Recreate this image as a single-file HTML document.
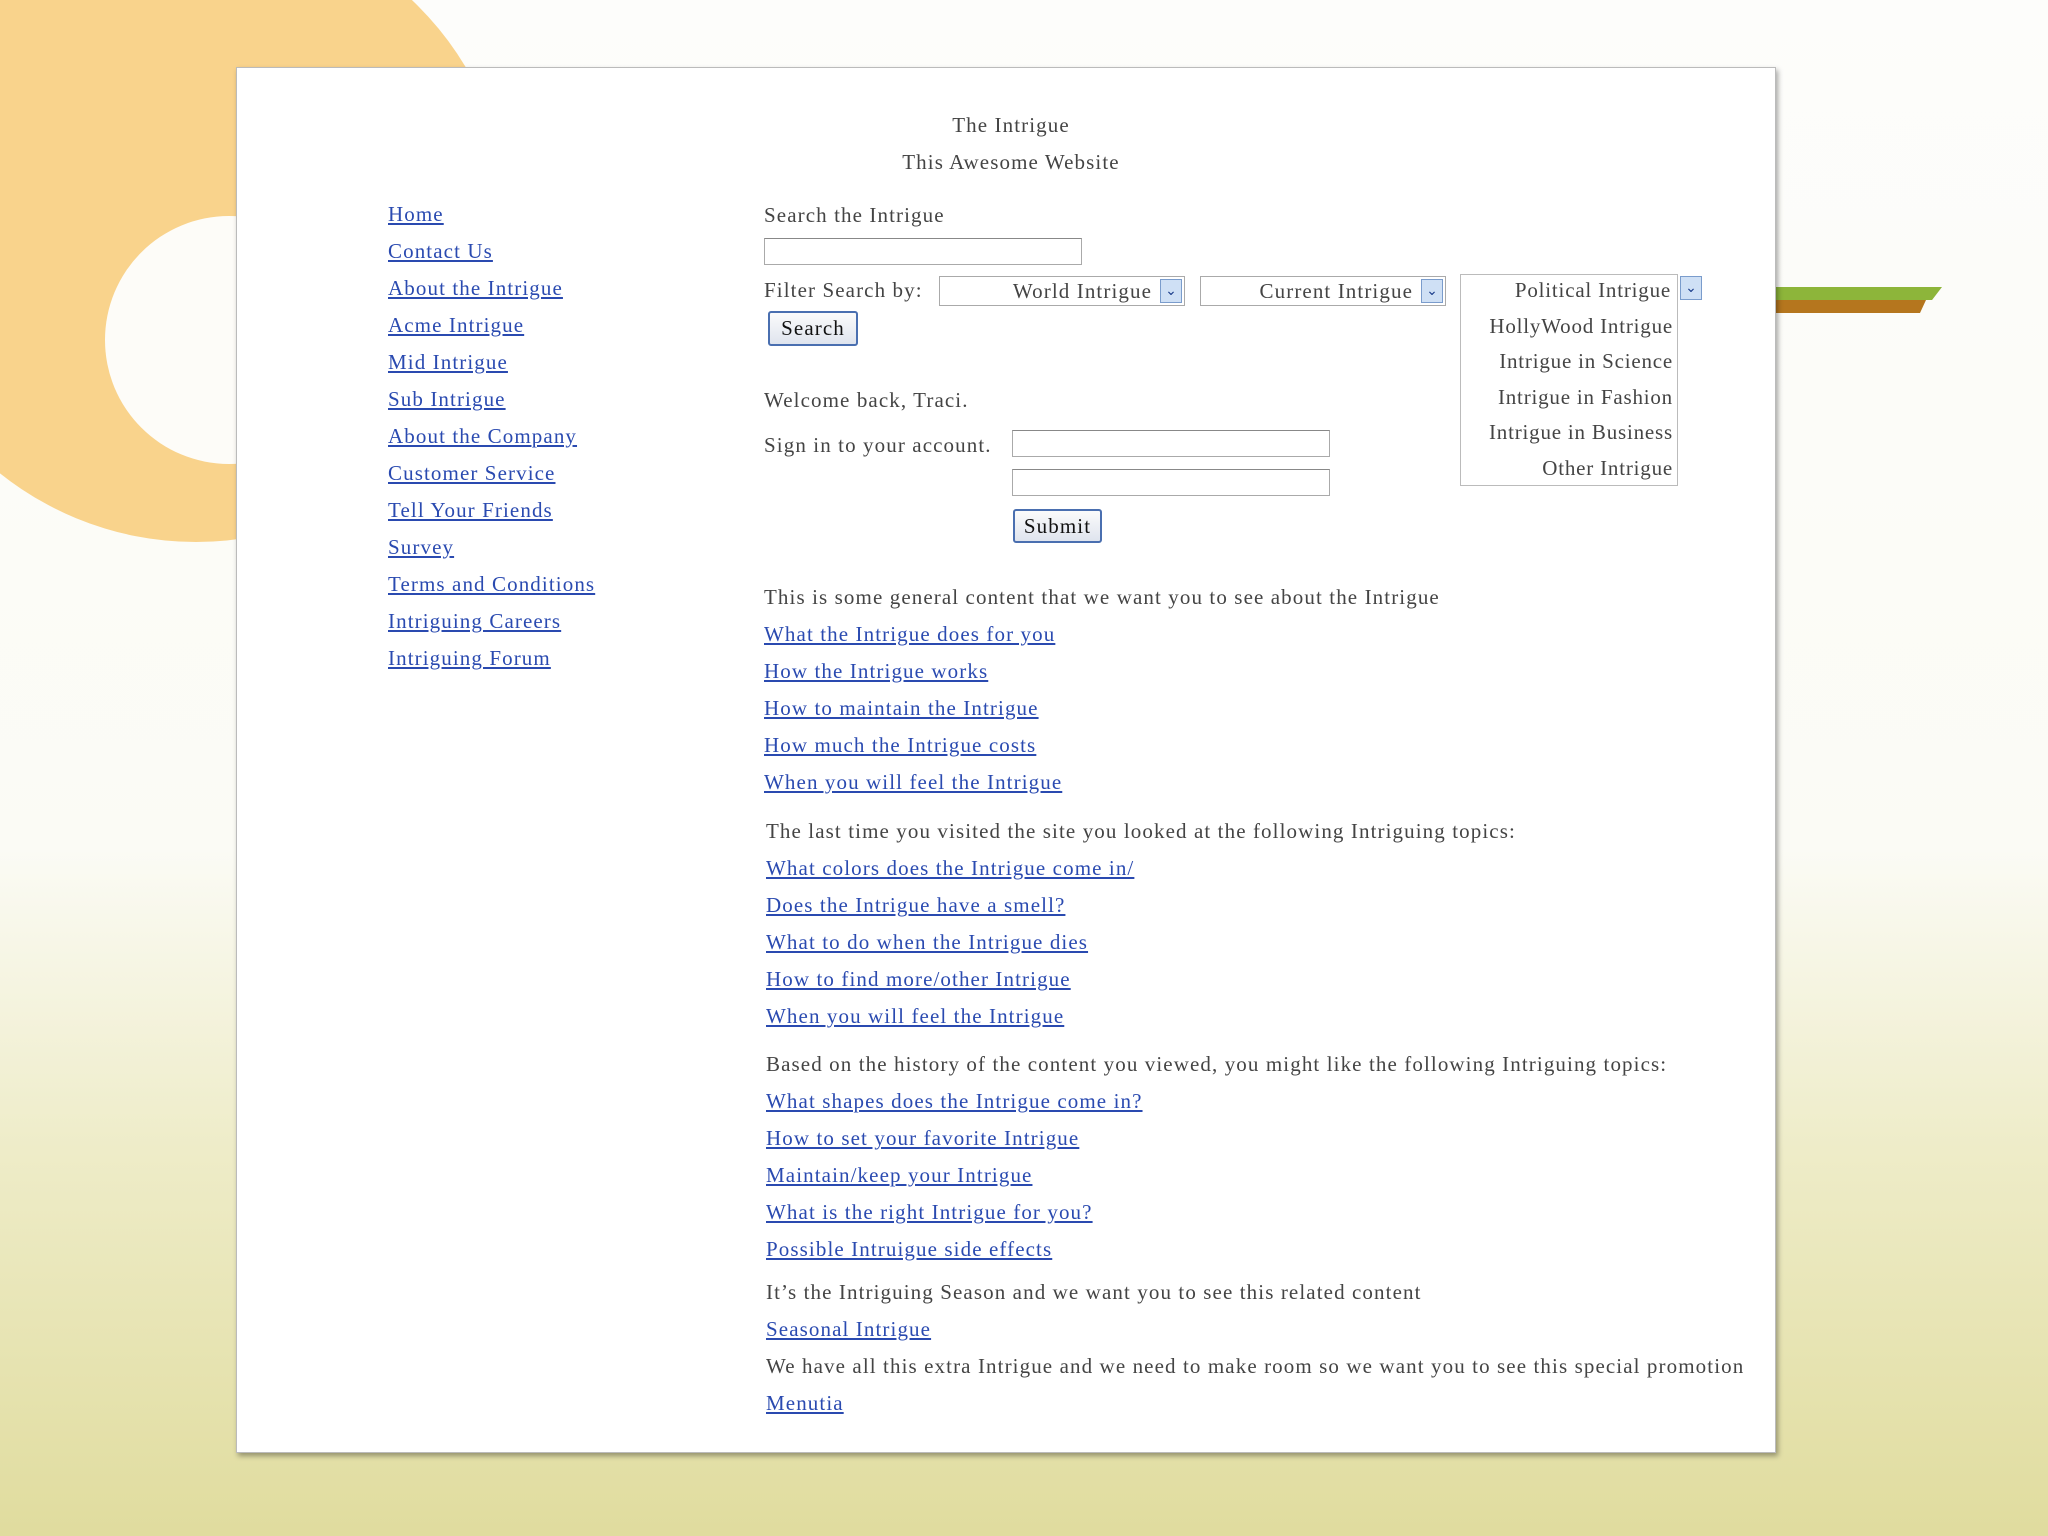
<!DOCTYPE html>
<html><head><meta charset="utf-8"><style>
html,body{margin:0;padding:0}
body{width:2048px;height:1536px;position:relative;overflow:hidden;
background:linear-gradient(to bottom,#fdfdfb 0px,#fbfbf5 850px,#eeecc8 1150px,#e0dc9e 1536px);
font-family:"Liberation Serif",serif;color:#444;font-size:21px;letter-spacing:1.1px}
.blob{position:absolute;left:-118px;top:-86px;width:628px;height:628px;border-radius:50%;background:#f9d38c}
.hole{position:absolute;left:105px;top:216px;width:248px;height:248px;border-radius:50%;background:#fdfcf8}
.bar1{position:absolute;left:1776px;top:287px;width:166px;height:13px;background:#8db53a;clip-path:polygon(0 0,100% 0,94% 100%,0 100%)}
.bar2{position:absolute;left:1776px;top:300px;width:150px;height:13px;background:#b5761e;clip-path:polygon(0 0,100% 0,96% 100%,0 100%)}
.card{position:absolute;left:236px;top:67px;width:1538px;height:1384px;background:#fff;border:1px solid #bbb;box-shadow:2px 3px 5px rgba(0,0,0,.35)}
.t{position:absolute;white-space:nowrap;line-height:24px}
a{color:#2a4ab0;text-decoration:underline}
.c{text-align:center;width:400px;left:811px}
.inp{position:absolute;border:1px solid #aaa;border-top-color:#888;background:#fff}
.sel{position:absolute;border:1px solid #aaa;background:#fff;height:28px}
.sel span{position:absolute;right:32px;top:2px}
.arr{position:absolute;right:2px;top:2px;width:20px;height:22px;background:#cfe0f5;border:1px solid #7a9ccc;color:#1a3c8a;font-size:14px;text-align:center;line-height:22px;font-family:"DejaVu Sans",sans-serif;letter-spacing:0}
.btn{position:absolute;border:2px solid #4a6fb0;border-radius:3px;background:linear-gradient(#fbfbfb,#dfe4ee);color:#111;text-align:center}
.lst{position:absolute;left:1460px;top:274px;width:216px;height:210px;border:1px solid #bbb;background:#fff;letter-spacing:0.8px}
.lst div{text-align:right;padding-right:4px;height:35.5px;line-height:30px}
</style></head><body>
<div class="blob"></div><div class="hole"></div>
<div class="bar1"></div><div class="bar2"></div>
<div class="card"></div>

<div class="t c" style="top:113px">The Intrigue</div>
<div class="t c" style="top:150px">This Awesome Website</div>

<div class="t" style="left:388px;top:202px"><a>Home</a></div>
<div class="t" style="left:388px;top:239px"><a>Contact Us</a></div>
<div class="t" style="left:388px;top:276px"><a>About the Intrigue</a></div>
<div class="t" style="left:388px;top:313px"><a>Acme Intrigue</a></div>
<div class="t" style="left:388px;top:350px"><a>Mid Intrigue</a></div>
<div class="t" style="left:388px;top:387px"><a>Sub Intrigue</a></div>
<div class="t" style="left:388px;top:424px"><a>About the Company</a></div>
<div class="t" style="left:388px;top:461px"><a>Customer Service</a></div>
<div class="t" style="left:388px;top:498px"><a>Tell Your Friends</a></div>
<div class="t" style="left:388px;top:535px"><a>Survey</a></div>
<div class="t" style="left:388px;top:572px"><a>Terms and Conditions</a></div>
<div class="t" style="left:388px;top:609px"><a>Intriguing Careers</a></div>
<div class="t" style="left:388px;top:646px"><a>Intriguing Forum</a></div>

<div class="t" style="left:764px;top:203px">Search the Intrigue</div>
<div class="inp" style="left:764px;top:238px;width:316px;height:25px"></div>
<div class="t" style="left:764px;top:278px">Filter Search by:</div>
<div class="sel" style="left:939px;top:276px;width:244px"><span>World Intrigue</span><div class="arr">&#8964;</div></div>
<div class="sel" style="left:1200px;top:276px;width:244px"><span>Current Intrigue</span><div class="arr">&#8964;</div></div>
<div class="lst"><div style="padding-right:6px">Political Intrigue</div><div>HollyWood Intrigue</div><div>Intrigue in Science</div><div>Intrigue in Fashion</div><div>Intrigue in Business</div><div>Other Intrigue</div></div>
<div class="arr" style="left:1680px;top:276px;right:auto">&#8964;</div>
<div class="btn" style="left:768px;top:311px;width:86px;height:31px;line-height:31px">Search</div>

<div class="t" style="left:764px;top:388px">Welcome back, Traci.</div>
<div class="t" style="left:764px;top:433px">Sign in to your account.</div>
<div class="inp" style="left:1012px;top:430px;width:316px;height:25px"></div>
<div class="inp" style="left:1012px;top:469px;width:316px;height:25px"></div>
<div class="btn" style="left:1013px;top:509px;width:85px;height:30px;line-height:30px">Submit</div>

<div class="t" style="left:764px;top:585px">This is some general content that we want you to see about the Intrigue</div>
<div class="t" style="left:764px;top:622px"><a>What the Intrigue does for you</a></div>
<div class="t" style="left:764px;top:659px"><a>How the Intrigue works</a></div>
<div class="t" style="left:764px;top:696px"><a>How to maintain the Intrigue</a></div>
<div class="t" style="left:764px;top:733px"><a>How much the Intrigue costs</a></div>
<div class="t" style="left:764px;top:770px"><a>When you will feel the Intrigue</a></div>

<div class="t" style="left:766px;top:819px">The last time you visited the site you looked at the following Intriguing topics:</div>
<div class="t" style="left:766px;top:856px"><a>What colors does the Intrigue come in/</a></div>
<div class="t" style="left:766px;top:893px"><a>Does the Intrigue have a smell?</a></div>
<div class="t" style="left:766px;top:930px"><a>What to do when the Intrigue dies</a></div>
<div class="t" style="left:766px;top:967px"><a>How to find more/other Intrigue</a></div>
<div class="t" style="left:766px;top:1004px"><a>When you will feel the Intrigue</a></div>

<div class="t" style="left:766px;top:1052px">Based on the history of the content you viewed, you might like the following Intriguing topics:</div>
<div class="t" style="left:766px;top:1089px"><a>What shapes does the Intrigue come in?</a></div>
<div class="t" style="left:766px;top:1126px"><a>How to set your favorite Intrigue</a></div>
<div class="t" style="left:766px;top:1163px"><a>Maintain/keep your Intrigue</a></div>
<div class="t" style="left:766px;top:1200px"><a>What is the right Intrigue for you?</a></div>
<div class="t" style="left:766px;top:1237px"><a>Possible Intruigue side effects</a></div>

<div class="t" style="left:766px;top:1280px">It’s the Intriguing Season and we want you to see this related content</div>
<div class="t" style="left:766px;top:1317px"><a>Seasonal Intrigue</a></div>
<div class="t" style="left:766px;top:1354px">We have all this extra Intrigue and we need to make room so we want you to see this special promotion</div>
<div class="t" style="left:766px;top:1391px"><a>Menutia</a></div>
</body></html>
